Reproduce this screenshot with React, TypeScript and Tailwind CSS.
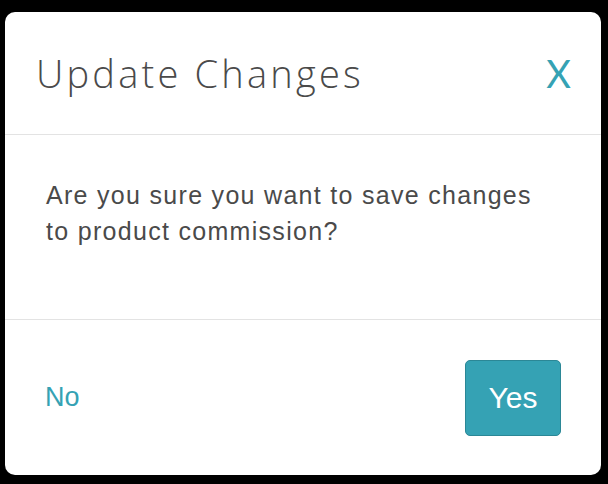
export default function App() {
  return (
    <div className="w-[608px] h-[484px] bg-black pt-[12px] pl-[5px]">
      <div className="w-[596px] h-[463px] bg-white rounded-[10px] flex flex-col overflow-hidden">
        <div className="h-[123px] flex items-center justify-between pl-[31px] pr-[30px] border-b border-[#e3e3e3]">
          <h1 className="text-[38px] font-light tracking-[3.2px] text-[#4a4a4a] font-['Open_Sans',sans-serif] leading-none">
            Update Changes
          </h1>
          <button className="text-[38px] font-normal text-[#35a2b4] font-['Lato',sans-serif] leading-none">X</button>
        </div>
        <div className="h-[185px] pl-[41px] pr-[50px] pt-[42px] border-b border-[#e3e3e3]">
          <p className="text-[25px] leading-[36px] tracking-[1.3px] text-[#4a4a4a] font-['Liberation_Sans',Arial,sans-serif]">
            Are you sure you want to save changes to product commission?
          </p>
        </div>
        <div className="flex-1 flex items-center justify-between pl-[40px] pr-[40px]">
          <button className="text-[27px] text-[#35a2b4] font-['Liberation_Sans',Arial,sans-serif]">No</button>
          <button className="w-[96px] h-[76px] rounded-[5px] bg-[#35a2b4] border border-[#2b8796] text-white text-[30px] font-['Liberation_Sans',Arial,sans-serif]">
            Yes
          </button>
        </div>
      </div>
    </div>
  );
}
